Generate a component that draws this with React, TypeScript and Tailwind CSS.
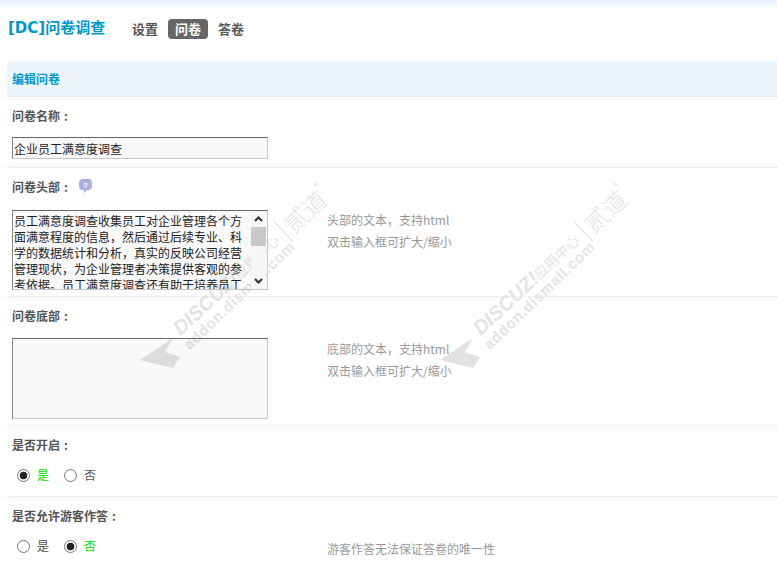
const cn = { fontFamily: '"Noto Sans CJK SC", sans-serif' };

function Watermark({ className }: { className: string }) {
  return (
    <div className={`absolute top-[190px] w-[220px] h-[220px] pointer-events-none select-none ${className}`}>
      {/* 箭头 */}
      <svg className="absolute left-0 top-[148px]" width="44" height="36" viewBox="0 0 44 36">
        <path d="M0 22 L33 0 L25 14 L40 19 L33 30 Z" fill="#e2e2e2" />
      </svg>
      <div className="absolute left-[36px] top-[126px] h-[30px] origin-left -rotate-[43deg] whitespace-nowrap text-[#e4e4e4] leading-none flex items-center">
        <span className="text-[20px] font-bold italic font-['Liberation_Sans']">DISCUZ!</span>
        <span className="text-[14px]">应用中心</span>
        <span className="ml-[9px] mr-[5px] w-[1px] h-[28px] bg-[#e0e0e0]" />
        <span className="text-[24px] font-light">贰道</span>
        <span className="text-[9px] -mt-[22px]">®</span>
      </div>
      <div className="absolute left-[46px] top-[149px] origin-left -rotate-[44deg] whitespace-nowrap text-[#e4e4e4] leading-none text-[15px] font-bold font-['Liberation_Sans'] tracking-[0.7px]">
        addon.dismall.com
      </div>
    </div>
  );
}

function Radio({ label, checked }: { label: string; checked?: boolean }) {
  return (
    <label className="flex items-center mr-[10px]">
      <input
        type="radio"
        checked={checked}
        readOnly
        className="appearance-none w-[13px] h-[13px] ml-[5px] mr-[7px] rounded-full border border-[#777] bg-white checked:bg-[radial-gradient(circle,#222_0,#222_3.5px,#fff_4.2px)]"
      />
      <span className={checked ? 'text-[#00dd00]' : 'text-[#555]'}>{label}</span>
    </label>
  );
}

function Row({
  label,
  help,
  tip,
  children,
  height,
  bodyClass,
  helpClass,
}: {
  label: string;
  help?: string[];
  tip?: boolean;
  children: React.ReactNode;
  height: string;
  bodyClass: string;
  helpClass?: string;
}) {
  return (
    <div className={`border-b border-dotted border-[#d8e4ee] ${height} pl-[5px]`}>
      <div className="flex items-center h-[38px] font-bold text-[#555]">
        {label}
        <span className="ml-[4px]">:</span>
        {tip && (
          <svg className="ml-[11px] -mt-[3px]" width="13" height="14" viewBox="0 0 13 14">
            <path d="M4 0 H9 Q13 0 13 4 V7 Q13 11 9 11 H8 L5 14 V11 H4 Q0 11 0 7 V4 Q0 0 4 0 Z" fill="#aab0e0" />
            <text x="6.5" y="8.5" fontSize="8" textAnchor="middle" fill="#fff" fontFamily="Liberation Sans">?</text>
          </svg>
        )}
      </div>
      <div className={`flex ${bodyClass}`}>
        <div className="w-[315px] shrink-0">{children}</div>
        {help && (
          <div className={`text-[#999] leading-[22px] self-start ${helpClass ?? ''}`}>
            {help.map((h) => (
              <div key={h}>{h}</div>
            ))}
          </div>
        )}
      </div>
    </div>
  );
}

// 배경 워터마크가 비치도록 반투명 배경
const fieldClass =
  'block w-[256px] bg-[#00000006] border border-[#c6c6c6] border-t-[#666] border-l-[#888] text-[#222] text-[12px] outline-none';

export default function App() {
  return (
    <div className="relative w-[777px] h-[565px] overflow-hidden bg-white text-[12px]" style={cn}>
      <Watermark className="left-[140px]" />
      <Watermark className="left-[440px]" />

      <div className="relative">
        {/* 상단 그라데이션 */}
        <div className="h-[10px] bg-gradient-to-b from-[#e6f0fa] to-white" />

        {/* 헤더 */}
        <div className="flex items-center h-[37px] pl-[8px]">
          <h1 className="text-[15px] font-bold text-[#0099cc] w-[124px] font-['DejaVu_Sans','Noto_Sans_CJK_SC',sans-serif]">[DC]问卷调查</h1>
          <a className="text-[13px] font-bold text-[#555] mr-[10px]">设置</a>
          <a className="text-[13px] font-bold text-white bg-[#666] rounded-[4px] h-[20px] flex items-center px-[7px] mr-[10px]">问卷</a>
          <a className="text-[13px] font-bold text-[#555]">答卷</a>
        </div>

        <div className="ml-[7px] mt-[14px]">
          <div className="h-[36px] pl-[5px] pt-[1px] flex items-center bg-[#eef5fd] border-b border-dotted border-[#d8e4ee] font-bold text-[#0099cc]">
            编辑问卷
          </div>

          <Row label="问卷名称" height="h-[71px]" bodyClass="mt-[2px]">
            <input readOnly value="企业员工满意度调查" className={`${fieldClass} h-[22px] px-[1px]`} />
          </Row>

          <Row
            label="问卷头部"
            tip
            height="h-[129px]"
            bodyClass="mt-[4px]"
            helpClass="-mt-[1px]"
            help={['头部的文本，支持html', '双击输入框可扩大/缩小']}
          >
            <div className="relative w-[256px]">
              <textarea
                readOnly
                className={`${fieldClass} h-[80px] pl-[1px] pr-[20px] pt-[2px] leading-[16px] resize-none overflow-hidden`}
                value="员工满意度调查收集员工对企业管理各个方面满意程度的信息，然后通过后续专业、科学的数据统计和分析，真实的反映公司经营管理现状，为企业管理者决策提供客观的参考依据。员工满意度调查还有助于培养员工对企业的认同感、归属感。"
              />
              {/* 滚动条 */}
              <div className="absolute right-[2px] top-[1px] bottom-[1px] w-[15px] bg-[#f6f6f6] flex flex-col items-center justify-between">
                <svg className="mt-[5px]" width="9" height="6" viewBox="0 0 9 6">
                  <path d="M1 5 L4.5 1.5 L8 5" fill="none" stroke="#333" strokeWidth="2" />
                </svg>
                <div className="absolute left-0 top-[16px] w-[15px] h-[19px] bg-[#c8c8c8]" />
                <svg className="mb-[5px]" width="9" height="6" viewBox="0 0 9 6">
                  <path d="M1 1 L4.5 4.5 L8 1" fill="none" stroke="#333" strokeWidth="2" />
                </svg>
              </div>
            </div>
          </Row>

          <Row
            label="问卷底部"
            height="h-[129px]"
            bodyClass="mt-[3px]"
            help={['底部的文本，支持html', '双击输入框可扩大/缩小']}
          >
            <textarea readOnly className={`${fieldClass} h-[81px] resize-none`} />
          </Row>

          <Row label="是否开启" height="h-[71px]" bodyClass="mt-[1px]">
            <div className="flex items-center h-[20px]">
              <Radio label="是" checked />
              <Radio label="否" />
            </div>
          </Row>

          <div className="pl-[5px]">
            <div className="flex items-center h-[38px] font-bold text-[#555]">
              是否允许游客作答<span className="ml-[4px]">:</span>
            </div>
            <div className="flex items-center h-[20px] mt-[1px]">
              <div className="flex items-center w-[315px]">
                <Radio label="是" />
                <Radio label="否" checked />
              </div>
              <span className="text-[#999] mt-[6px]">游客作答无法保证答卷的唯一性</span>
            </div>
          </div>
        </div>
      </div>
    </div>
  );
}
